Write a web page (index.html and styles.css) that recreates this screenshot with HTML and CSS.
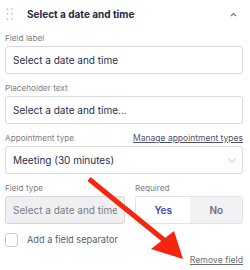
FILE: index.html
```html
<!DOCTYPE html>
<html lang="en">
<head>
    <meta charset="UTF-8">
    <meta name="viewport" content="width=device-width, initial-scale=1.0">
    <title>Field settings</title>
    <link rel="stylesheet" href="styles.css">
</head>
<body>
    <div class="field-panel">
        <div class="panel-header">
            <svg class="drag-handle" width="8" height="14" viewBox="0 0 8 14">
                <circle cx="1.5" cy="2" r="0.9"/><circle cx="5.8" cy="2" r="0.9"/>
                <circle cx="1.5" cy="7" r="0.9"/><circle cx="5.8" cy="7" r="0.9"/>
                <circle cx="1.5" cy="12" r="0.9"/><circle cx="5.8" cy="12" r="0.9"/>
            </svg>
            <h3 class="panel-title">Select a date and time</h3>
            <svg class="collapse-icon" width="7" height="5" viewBox="0 0 7 5">
                <path d="M1 4 L3.5 1.5 L6 4" fill="none" stroke="#7a7a84" stroke-width="1.2"/>
            </svg>
        </div>

        <div class="panel-body">
            <div class="form-group">
                <label for="field-label">Field label</label>
                <input type="text" id="field-label" value="Select a date and time">
            </div>
            <div class="form-group">
                <label for="placeholder">Placeholder text</label>
                <input type="text" id="placeholder" value="Select a date and time...">
            </div>
            <div class="form-group">
                <div class="label-row">
                    <label>Appointment type</label>
                    <a href="#" class="manage-link">Manage appointment types</a>
                </div>
                <div class="select-box">
                    <span>Meeting (30 minutes)</span>
                    <svg width="8" height="5" viewBox="0 0 8 5">
                        <path d="M1 1 L4 4 L7 1" fill="none" stroke="#bdbdc4" stroke-width="1"/>
                    </svg>
                </div>
            </div>
            <div class="form-row">
                <div class="form-group">
                    <label for="field-type">Field type</label>
                    <input type="text" id="field-type" class="readonly" value="Select a date and time" disabled>
                </div>
                <div class="form-group">
                    <label>Required</label>
                    <div class="toggle">
                        <button class="toggle-btn active">Yes</button>
                        <button class="toggle-btn">No</button>
                    </div>
                </div>
            </div>
            <label class="checkbox-row">
                <span class="checkbox"></span>
                Add a field separator
            </label>
            <div class="remove-row">
                <a href="#" class="remove-link">Remove field</a>
            </div>
        </div>

        <!-- annotation arrow drawn over the form -->
        <svg class="annotation" width="250" height="270" viewBox="0 0 250 270">
            <line x1="89" y1="179" x2="164" y2="240" stroke="#f4260f" stroke-width="5"/>
            <polygon points="151,249 174,231 183,259" fill="#f4260f"/>
        </svg>
    </div>
</body>
</html>
```

FILE: styles.css
```css
body {
    margin: 0;
    background-color: white;
    font-family: Inter, "Noto Sans", sans-serif;
    color: #2c2d4d;
}
.field-panel {
    position: relative;
    width: 250px;
    height: 270px;
    overflow: hidden;
}
.panel-header {
    display: flex;
    align-items: center;
    height: 28px;
    padding: 0 13px 0 6px;
}
.drag-handle {
    fill: #c9c9d0;
    margin-right: 13px;
}
.panel-title {
    flex: 1;
    margin: 0;
    font-size: 10px;
    font-weight: 700;
    color: #27284a;
}
.panel-body {
    padding: 4px 7px 0 5px;
}
.form-group {
    margin-bottom: 8px;
}
.form-group label,
.label-row label {
    display: block;
    font-size: 8.2px;
    line-height: 12px;
    color: #7d7d87;
    margin-bottom: 2px;
}
.label-row {
    display: flex;
    justify-content: space-between;
    align-items: flex-start;
}
.manage-link {
    font-size: 8.5px;
    line-height: 12px;
    color: #50506a;
}
.form-group input,
.select-box {
    display: block;
    box-sizing: border-box;
    width: 100%;
    height: 28px;
    padding: 0 7px;
    border: 1px solid #dadade;
    border-radius: 3px;
    font-family: inherit;
    font-size: 10px;
    color: #2c2d4d;
    background-color: white;
    outline: none;
}
.select-box {
    display: flex;
    align-items: center;
    justify-content: space-between;
    padding-right: 6px;
}
.form-row {
    display: grid;
    grid-template-columns: 120px 1fr;
    column-gap: 10px;
}
.form-row .form-group {
    margin-bottom: 8px;
}
.form-group input.readonly {
    background-color: #f0f0f2;
    border-color: #d6d6db;
    color: #7b7b86;
}
.toggle {
    display: flex;
    height: 28px;
    box-sizing: border-box;
    border: 1px solid #e2e2e6;
    border-radius: 3px;
    overflow: hidden;
}
.toggle-btn {
    border: none;
    margin: 0;
    padding: 0;
    font-family: inherit;
    font-size: 10px;
    font-weight: 600;
    background-color: #f2f2f4;
    color: #6e6e86;
    flex: 52;
}
.toggle-btn.active {
    background-color: white;
    color: #4845b5;
    flex: 55;
}
.checkbox-row {
    display: flex;
    align-items: center;
    height: 15px;
    font-size: 9.2px;
    color: #5a5b70;
}
.checkbox {
    width: 13px;
    height: 14px;
    box-sizing: border-box;
    border: 1px solid #c9c9cf;
    border-radius: 3px;
    margin-right: 9px;
}
.remove-row {
    display: flex;
    justify-content: flex-end;
    margin-top: 7px;
}
.remove-link {
    font-size: 8.7px;
    line-height: 12px;
    color: #6c6c76;
}
.annotation {
    position: absolute;
    left: 0;
    top: 0;
    pointer-events: none;
}
```
